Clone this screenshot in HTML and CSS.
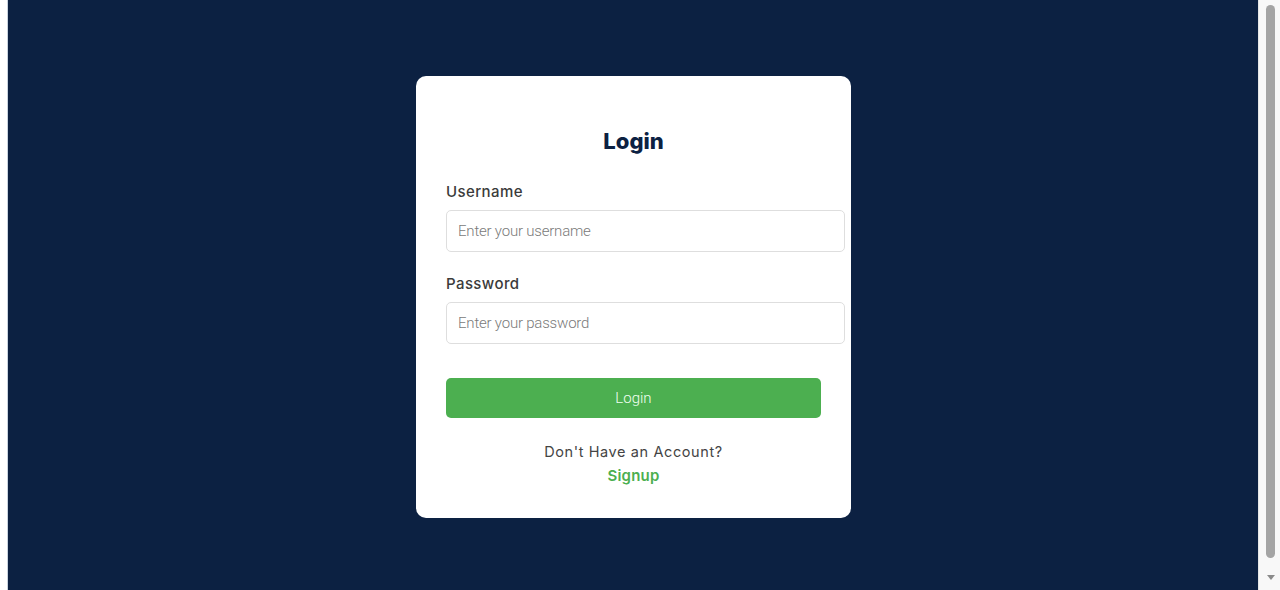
FILE: index.html
```html
<!DOCTYPE html>
<html lang="en">
<head>
<meta charset="utf-8">
<title>Login</title>
<link rel="stylesheet" href="styles.css">
</head>
<body>
<div class="frame">
  <div class="gutter"></div>
  <main class="stage">
    <form class="card">
      <h2 class="title">Login</h2>
      <label class="label" for="u">Username</label>
      <input class="field" id="u" type="text" placeholder="Enter your username">
      <label class="label label-pw" for="p">Password</label>
      <input class="field" id="p" type="password" placeholder="Enter your password">
      <button class="btn" type="button">Login</button>
      <p class="note">Don't Have an Account?</p>
      <a class="signup" href="#">Signup</a>
    </form>
  </main>
  <div class="scrollbar">
    <div class="thumb"></div>
    <div class="arrow"></div>
  </div>
</div>
</body>
</html>
```

FILE: styles.css
```css
* { box-sizing: border-box; }
html, body { margin: 0; padding: 0; height: 100%; }
body { background: #ffffff; font-family: "Inter", "Open Sans", sans-serif; }

.frame { display: flex; height: 590px; width: 1280px; }
.gutter { width: 8px; background: #ffffff; border-right: 1px solid #c9d3de; }
.stage {
  flex: 1;
  background: #0c2142;
  display: flex;
  align-items: center;
  justify-content: center;
}
.scrollbar {
  width: 22px;
  background: #f8f8f8;
  border-left: 1px solid #e6e6e6;
  display: flex;
  flex-direction: column;
  align-items: center;
  padding: 5px 0 0 0;
}
.thumb {
  width: 9px;
  height: 553px;
  background: #a4a4a4;
  border-radius: 5px;
  margin-left: 2px;
}
.arrow {
  margin-top: 17px;
  margin-left: 2px;
  width: 0; height: 0;
  border-left: 4px solid transparent;
  border-right: 4px solid transparent;
  border-top: 5px solid #8a8a8a;
}

.card {
  width: 435px;
  height: 442px;
  background: #ffffff;
  border-radius: 10px;
  padding: 50px 30px 30px 30px;
  display: flex;
  flex-direction: column;
  margin-left: 1px;
  margin-top: 4px;
}
.title {
  margin: 0;
  text-align: center;
  font-size: 22px;
  line-height: 30px;
  font-weight: 800;
  color: #0c2142;
}
.label {
  margin-top: 25px;
  font-size: 15px;
  line-height: 22px;
  font-weight: 500;
  color: #3b3b3b;
  letter-spacing: 0.4px;
}
.label-pw { margin-top: 21px; }
.field {
  margin-top: 7px;
  width: 399px;
  height: 42px;
  border: 1px solid #dedede;
  border-radius: 5px;
  padding: 0 11px;
  font-family: "Roboto", "Liberation Sans", sans-serif;
  font-size: 15px;
  color: #333;
  background: #fff;
}
.field::placeholder { color: #7a7a7a; font-weight: 300; letter-spacing: -0.2px; }
.btn {
  margin-top: 34px;
  width: 375px;
  height: 40px;
  background: #4caf50;
  border: none;
  border-radius: 5px;
  color: #f2fff2;
  font-family: "Roboto", "Liberation Sans", sans-serif;
  font-size: 15px;
  font-weight: 300;
}
.note {
  margin: 23px 0 0 0;
  text-align: center;
  font-size: 14.5px;
  line-height: 22px;
  color: #444;
  letter-spacing: 0.6px;
}
.signup {
  margin-top: 2px;
  align-self: center;
  font-size: 15px;
  line-height: 22px;
  font-weight: 600;
  color: #4caf50;
  text-decoration: none;
  letter-spacing: 0.2px;
}
```
